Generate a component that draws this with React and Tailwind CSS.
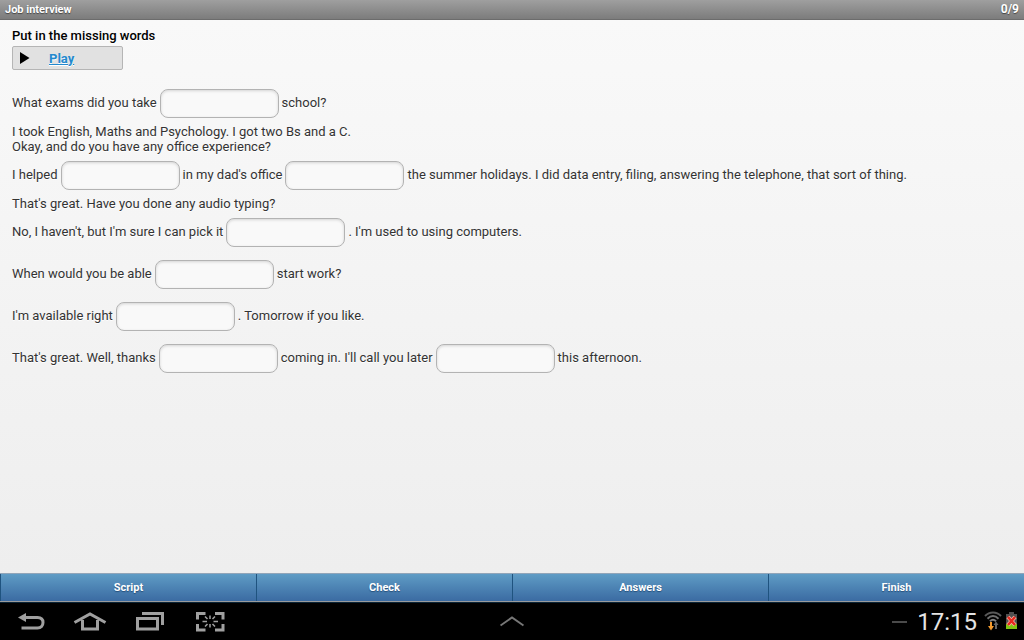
import React, { useState } from 'react';

// Strings are plain text, numbers are gaps to fill in
const lines = [
  ['What exams did you take', 0, 'school?'],
  ['I took English, Maths and Psychology. I got two Bs and a C.'],
  ['Okay, and do you have any office experience?'],
  ['I helped', 1, "in my dad's office", 2, 'the summer holidays. I did data entry, filing, answering the telephone, that sort of thing.'],
  ["That's great. Have you done any audio typing?"],
  ["No, I haven't, but I'm sure I can pick it", 3, ". I'm used to using computers."],
  ['When would you be able', 4, 'start work?'],
  ["I'm available right", 5, '. Tomorrow if you like.'],
  ["That's great. Well, thanks", 6, "coming in. I'll call you later", 7, 'this afternoon.']
];

const actions = ['Script', 'Check', 'Answers', 'Finish'];

const DialogLine = ({ parts, words, onChange }) => {
  if (parts.length === 1) {
    return <p>{parts[0]}</p>;
  }

  return (
    <div className="flex flex-wrap items-center gap-x-[3px] pt-[7px] pb-[6px]">
      {parts.map((part, i) =>
        typeof part === 'string' ? (
          <span key={i} className="pb-0.5">{part}</span>
        ) : (
          <input
            key={i}
            type="text"
            aria-label={`Missing word ${part + 1}`}
            value={words[part]}
            onChange={(e) => onChange(part, e.target.value)}
            className="h-[29px] w-[119px] rounded-lg border border-[#b3b3b3] bg-[#f9f9f9] px-2 shadow-[inset_0_1px_3px_rgba(0,0,0,0.15)] outline-none focus:border-[#387bbe]"
          />
        )
      )}
    </div>
  );
};

const SystemBar = () => (
  <div className="grid h-[38px] grid-cols-[1fr_auto_1fr] items-center border-t border-[#0b2436] bg-black px-[6px]">
    <div className="flex items-center gap-4 pl-[6px] text-[#a0a0a0]">
      <button type="button" aria-label="Back">
        <svg width="44" height="24" viewBox="0 0 44 24" fill="none" stroke="currentColor" strokeWidth="3">
          <path d="M11 7.500h14.500c3.500 0 5.500 2 5.500 5s-2 5.500-5.500 5.500H9.500" />
          <path d="M6 7.500 14 3v9z" fill="currentColor" stroke="none" />
        </svg>
      </button>
      <button type="button" aria-label="Home">
        <svg width="44" height="24" viewBox="0 0 44 24" fill="none" stroke="currentColor" strokeWidth="3">
          <path d="M2.500 12.500 18 4l15.500 8.500" />
          <path d="M10.500 10v9h15v-9" />
        </svg>
      </button>
      <button type="button" aria-label="Recent apps">
        <svg width="44" height="24" viewBox="0 0 44 24" fill="none" stroke="currentColor" strokeWidth="3">
          <path d="M5.500 8.500h20v10.500h-20z" />
          <path d="M10 3.500h20.500v11.500" />
        </svg>
      </button>
      <button type="button" aria-label="Screenshot">
        <svg width="44" height="24" viewBox="0 0 44 24" fill="none" stroke="currentColor" strokeWidth="3">
          <path d="M5.500 9.500v-6h8M23 3.500h8v6M31 14v6h-8M13.500 20h-8v-6" />
          <path d="M18 5.500v3.500M18 14v3.500M10.500 11.500h4.500M21.500 11.500H26M13 6.500l2.500 2.500M23 6.500 20.500 9M13 16.500l2.500-2.500M23 16.500 20.500 14" strokeWidth="1.500" />
        </svg>
      </button>
    </div>

    <button type="button" aria-label="Open tray">
      <svg width="24" height="12" viewBox="0 0 24 12" fill="none" stroke="#777" strokeWidth="2">
        <path d="M.500 9.500 12 1.500l11.500 8" />
      </svg>
    </button>

    <div className="flex items-center justify-end">
      <span className="mr-[10px] h-[2px] w-[15px] bg-[#4a4a4a]"></span>
      <time className="mr-[7px] text-2xl text-[#e4e4e4]">17:15</time>
      <svg className="mr-[3px]" width="18" height="22" viewBox="0 0 18 22" fill="none" strokeWidth="2">
        <path d="M1 5C5.500 .3 12.500 .3 17 5" stroke="#5a5a5a" />
        <path d="M3.500 7.700C7 4.200 11 4.200 14.500 7.700" stroke="#707070" />
        <path d="M6 10.300c2-2 4-2 6 0" stroke="#808080" />
        <path d="M7 11v5" stroke="#f29a2e" />
        <path d="M4 15h6l-3 4.500z" fill="#f29a2e" />
        <path d="M12 18v-5" stroke="#666" />
        <path d="M9.500 14 12 10.500 14.500 14z" fill="#666" />
      </svg>
      <svg width="13" height="20" viewBox="0 0 13 20">
        <path d="M1 2h3V0h5v2h3v15H1z" fill="#505050" />
        <path d="M1 12h11v5H1z" fill="#82c414" />
        <path d="m3 5 7 8M10 5l-7 8" stroke="#f9b5a5" strokeWidth="4" />
        <path d="m3 5 7 8M10 5l-7 8" stroke="#e6281e" strokeWidth="2.500" />
      </svg>
    </div>
  </div>
);

const App = () => {
  const [words, setWords] = useState(Array(8).fill(''));

  const handleChange = (index, value) => {
    setWords(words.map((word, i) => (i === index ? value : word)));
  };

  return (
    <div className="flex min-h-screen flex-col bg-[#eee] font-['Roboto',sans-serif] text-[13px] leading-[15px] text-[#333]">
      <header className="flex h-5 items-center justify-between border-b border-[#6c6c6c] bg-linear-to-b from-[#9f9f9f] to-[#7c7c7c] px-[5px] pb-px font-bold text-white text-shadow-[0_1px_1px_#444]">
        <h1 className="text-[11px]">Job interview</h1>
        <span className="text-xs">0/9</span>
      </header>

      <main className="flex-1 bg-linear-to-b from-[#f9f9f9] to-[#eee] px-3 pt-2 text-shadow-[0_1px_0_#fff]">
        <h2 className="font-medium text-black">Put in the missing words</h2>
        <div className="mt-[3px] mb-3 flex h-6 w-[111px] items-center rounded-xs border border-[#b5b5b5] bg-[#e1e1e1] pl-[7px]">
          <svg width="10" height="12" viewBox="0 0 10 12" fill="#000">
            <path d="M0 0 9.500 6 0 12z" />
          </svg>
          <a href="#play" className="ml-[19px] font-bold text-[#2489ce] underline">
            Play
          </a>
        </div>

        {lines.map((parts, i) => (
          <DialogLine key={i} parts={parts} words={words} onChange={handleChange} />
        ))}
      </main>

      <footer>
        <div className="grid h-[29px] grid-cols-4 border-t border-b border-t-[#91a5b9] border-b-[#9b9b9b] bg-linear-to-b from-[#5f9cc5] to-[#3b6ba2]">
          {actions.map((label) => (
            <button
              key={label}
              type="button"
              className="border-l border-[#1f537f] text-[11px] font-bold text-white text-shadow-[0_1px_1px_#254f7a]"
            >
              {label}
            </button>
          ))}
        </div>
        <SystemBar />
      </footer>
    </div>
  );
};

export default App;
